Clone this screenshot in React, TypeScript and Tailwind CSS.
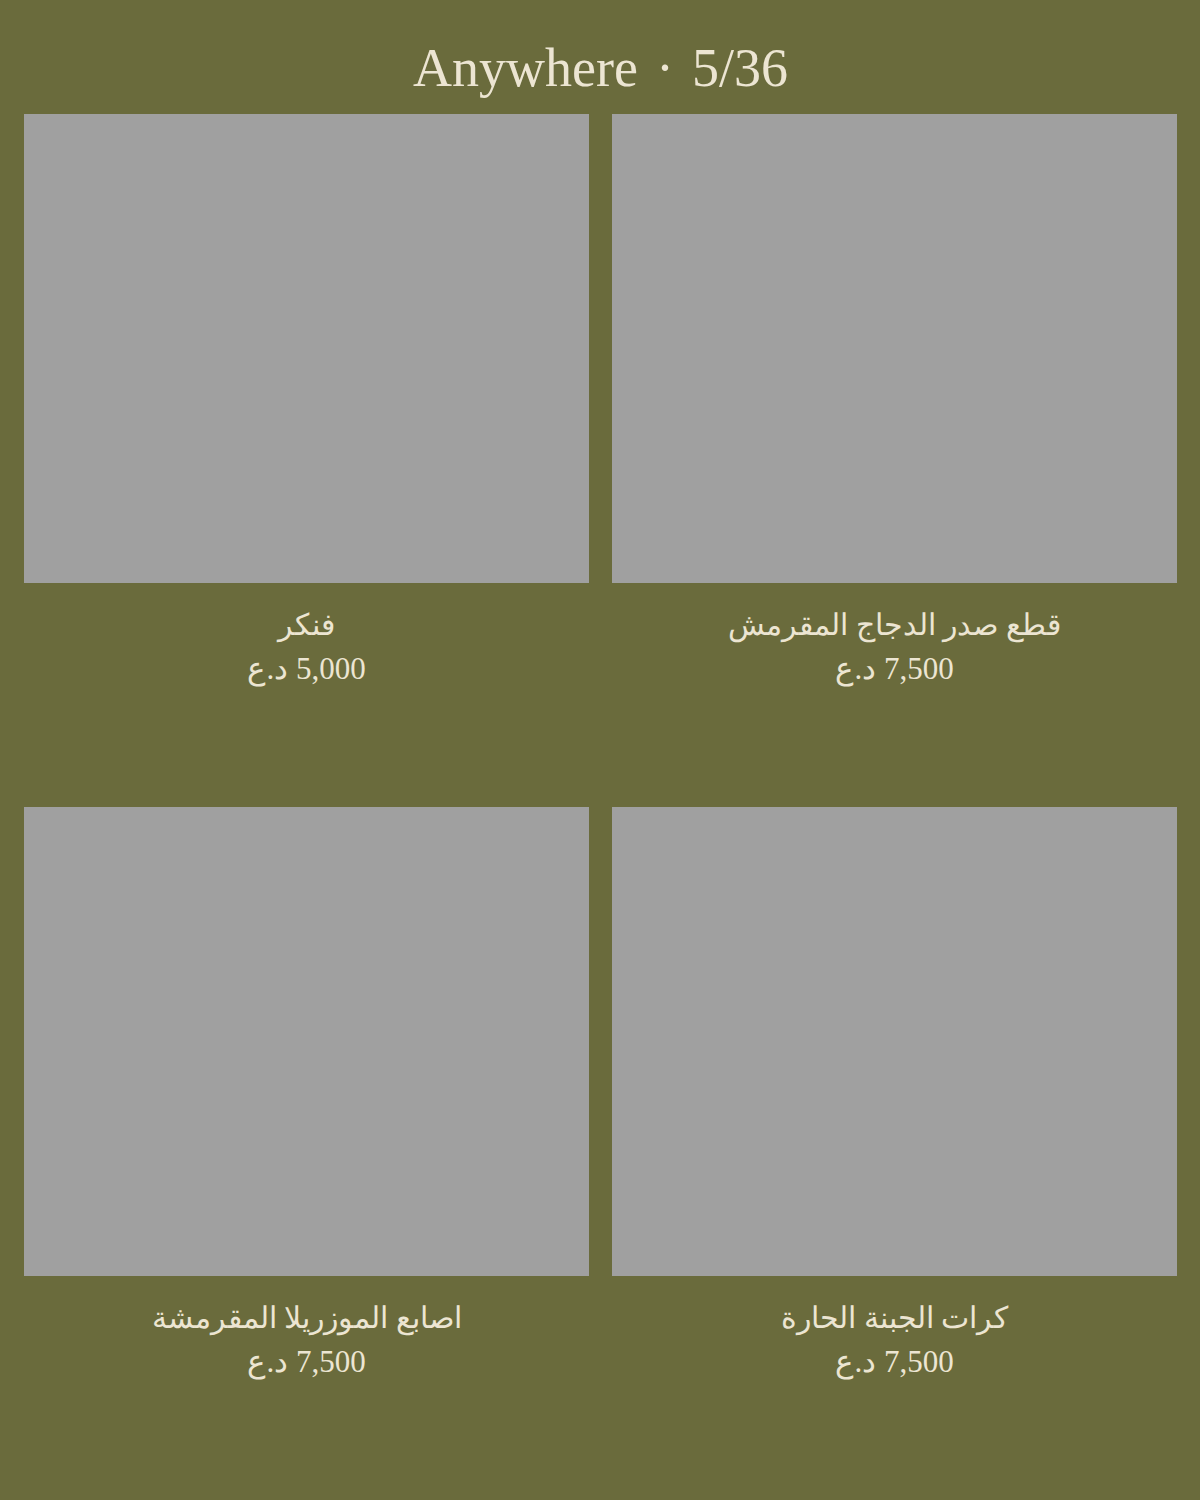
const items = [
  { name: "قطع صدر الدجاج المقرمش", price: "7,500 د.ع" },
  { name: "فنكر", price: "5,000 د.ع" },
  { name: "كرات الجبنة الحارة", price: "7,500 د.ع" },
  { name: "اصابع الموزريلا المقرمشة", price: "7,500 د.ع" },
];

function MenuCard({ name, price }: { name: string; price: string }) {
  return (
    <div className="flex flex-col">
      <div className="h-[469px] bg-[#a0a0a0]" />
      <div dir="rtl" className="h-[200px] pt-[19px] text-center text-[#ece5d2]">
        <div className="text-[30px] leading-[46px]">{name}</div>
        <div className="text-[31px] leading-[42px]">{price}</div>
      </div>
    </div>
  );
}

export default function App() {
  return (
    <div
      className="min-h-[1500px] w-full bg-[#6a6b3c] pl-6 pr-[23px] pt-[36px]"
      style={{ fontFamily: '"Liberation Serif", "DejaVu Serif", serif' }}
    >
      <h1 className="text-center text-[54px] leading-[64px] text-[#ece5d2]">
        Anywhere<span className="mx-[18px]">·</span>5/36
      </h1>
      <div dir="rtl" className="mt-[14px] grid grid-cols-2 gap-x-[23px] gap-y-[24px]">
        {items.map((it) => (
          <MenuCard key={it.name} name={it.name} price={it.price} />
        ))}
      </div>
    </div>
  );
}
